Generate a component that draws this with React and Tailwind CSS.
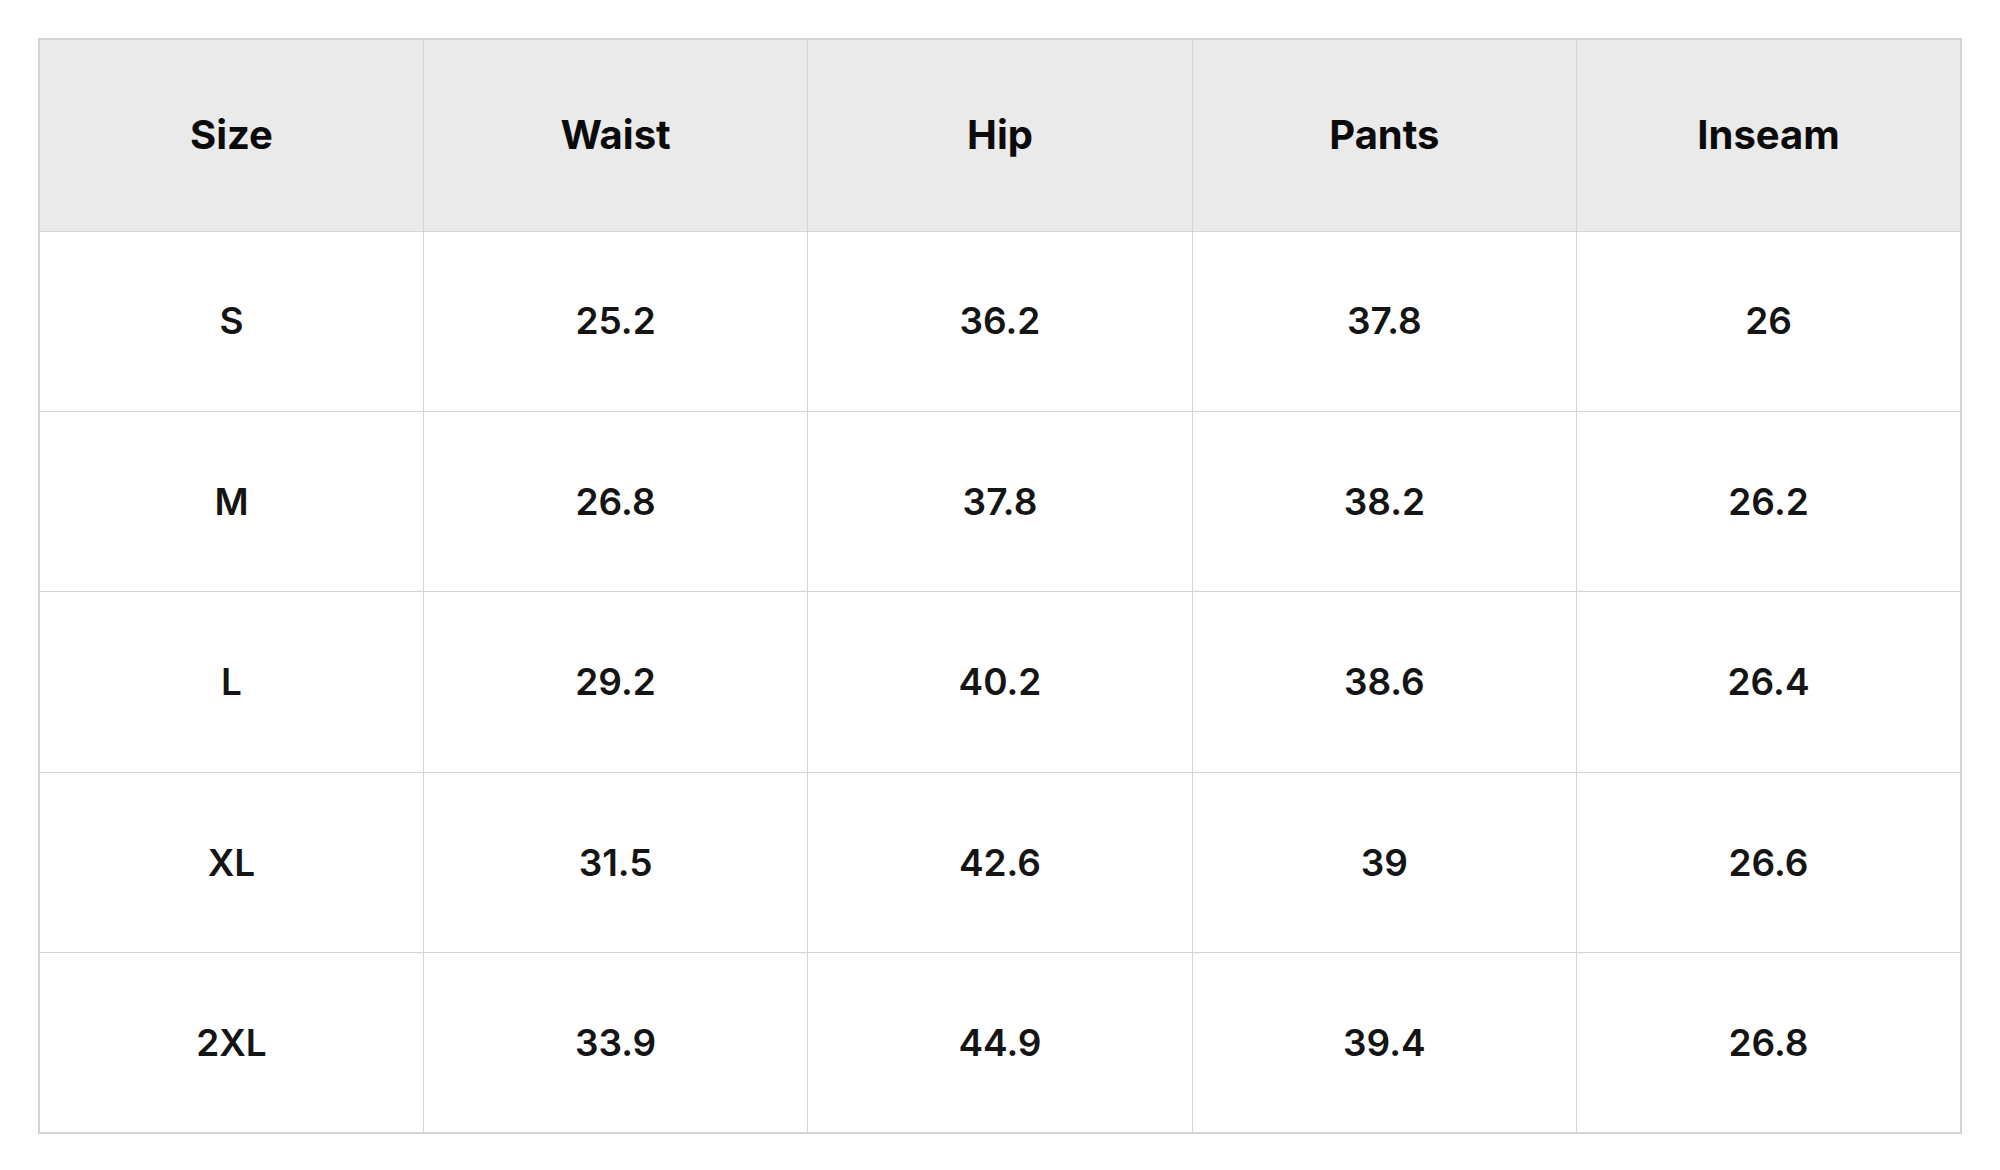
const headers = ["Size", "Waist", "Hip", "Pants", "Inseam"];

const rows = [
  ["S", "25.2", "36.2", "37.8", "26"],
  ["M", "26.8", "37.8", "38.2", "26.2"],
  ["L", "29.2", "40.2", "38.6", "26.4"],
  ["XL", "31.5", "42.6", "39", "26.6"],
  ["2XL", "33.9", "44.9", "39.4", "26.8"],
];

export default function App() {
  return (
    <div className="min-h-screen bg-white p-[38px] font-['Inter','Liberation_Sans',sans-serif]">
      <table className="w-full table-fixed border-collapse border-2 border-[#d4d4d4]">
        <thead>
          <tr className="bg-[#eaeaea]">
            {headers.map((h) => (
              <th
                key={h}
                className="h-[192px] border-[1.5px] border-[#d4d4d4] text-center align-middle text-[40px] font-bold text-[#0b0b0b]"
              >
                {h}
              </th>
            ))}
          </tr>
        </thead>
        <tbody>
          {rows.map((row) => (
            <tr key={row[0]}>
              {row.map((cell, i) => (
                <td
                  key={i}
                  className="h-[180.4px] border-[1.5px] border-[#d4d4d4] text-center align-middle text-[37px] font-semibold text-[#151515]"
                >
                  {cell}
                </td>
              ))}
            </tr>
          ))}
        </tbody>
      </table>
    </div>
  );
}
